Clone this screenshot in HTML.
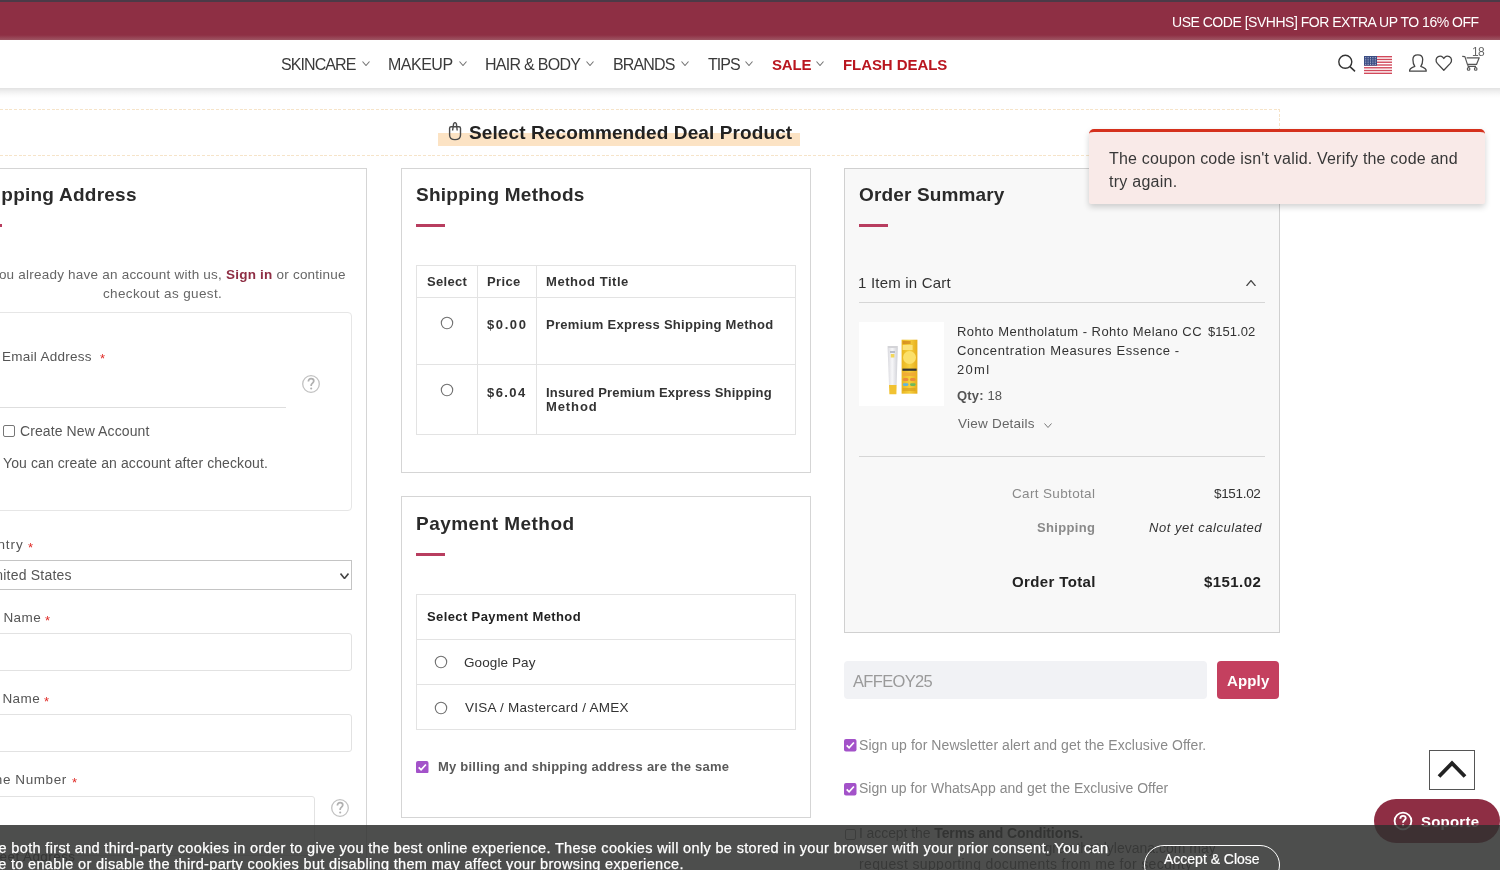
<!DOCTYPE html>
<html><head><meta charset="utf-8"><style>

*{margin:0;padding:0;box-sizing:border-box}
html,body{width:1500px;height:870px;overflow:hidden;background:#fff;font-family:"Liberation Sans",sans-serif;position:relative}
.t{position:absolute;white-space:nowrap;display:block;will-change:transform}
.b{position:absolute}
.red{color:#e02b27}

</style></head><body>
<div class="b" style="left:0px;top:88px;width:1500px;height:782px;background:#fff"></div>
<div class="b" style="left:0px;top:0px;width:1500px;height:40px;background:#8e2f44"></div>
<div class="b" style="left:0px;top:0px;width:1500px;height:2px;background:#4b3a47"></div>
<div class="b" style="left:0px;top:35px;width:1500px;height:5px;background:linear-gradient(#8e2f44,#9d5563)"></div>
<div class="b" style="left:0px;top:40px;width:1500px;height:48px;background:#fff"></div>
<div class="b" style="left:0px;top:88px;width:1500px;height:10px;background:linear-gradient(#e2e2e2,#f0f0f0 35%,#fafafa 70%,#fff)"></div>
<div class="b" style="left:0px;top:109px;width:1280px;height:1px;background:repeating-linear-gradient(90deg,#f6e4c9 0 3px,transparent 3px 4.7px)"></div>
<div class="b" style="left:0px;top:155px;width:1280px;height:1px;background:repeating-linear-gradient(90deg,#f6e4c9 0 3px,transparent 3px 4.7px)"></div>
<div class="b" style="left:1279px;top:109px;width:1px;height:47px;background:repeating-linear-gradient(180deg,#f6e4c9 0 3px,transparent 3px 4.7px)"></div>
<div class="b" style="left:438px;top:133px;width:362px;height:13px;background:#fce3c4"></div>
<div class="b" style="left:-41px;top:168px;width:408px;height:720px;border:1px solid #d5d5d5;background:#fff"></div>
<div class="b" style="left:-20px;top:224px;width:22px;height:3px;background:#b83d5f"></div>
<div class="b" style="left:-30px;top:312px;width:382px;height:199px;border:1px solid #e6e6e6;border-radius:4px;background:#fff"></div>
<div class="b" style="left:-30px;top:407px;width:316px;height:1px;background:#dedede"></div>
<div class="b" style="left:-30px;top:560px;width:382px;height:30px;border:1px solid #c4c4c4;background:#fff"></div>
<div class="b" style="left:-30px;top:633px;width:382px;height:38px;border:1px solid #e2e2e2;border-radius:3px;background:#fff"></div>
<div class="b" style="left:-30px;top:714px;width:382px;height:38px;border:1px solid #e2e2e2;border-radius:3px;background:#fff"></div>
<div class="b" style="left:-30px;top:796px;width:345px;height:60px;border:1px solid #e2e2e2;border-radius:3px;background:#fff"></div>
<div class="b" style="left:401px;top:168px;width:410px;height:305px;border:1px solid #d5d5d5;background:#fff"></div>
<div class="b" style="left:416px;top:224px;width:29px;height:3px;background:#b83d5f"></div>
<div class="b" style="left:416px;top:265px;width:380px;height:170px;border:1px solid #e3e3e3"></div>
<div class="b" style="left:416px;top:297px;width:380px;height:1px;background:#e3e3e3"></div>
<div class="b" style="left:416px;top:364px;width:380px;height:1px;background:#e3e3e3"></div>
<div class="b" style="left:477px;top:265px;width:1px;height:170px;background:#e3e3e3"></div>
<div class="b" style="left:536px;top:265px;width:1px;height:170px;background:#e3e3e3"></div>
<div class="b" style="left:401px;top:496px;width:410px;height:322px;border:1px solid #d5d5d5;background:#fff"></div>
<div class="b" style="left:416px;top:553px;width:29px;height:3px;background:#b83d5f"></div>
<div class="b" style="left:416px;top:594px;width:380px;height:136px;border:1px solid #e3e3e3"></div>
<div class="b" style="left:416px;top:639px;width:380px;height:1px;background:#e3e3e3"></div>
<div class="b" style="left:416px;top:684px;width:380px;height:1px;background:#e3e3e3"></div>
<div class="b" style="left:844px;top:168px;width:436px;height:465px;border:1px solid #d0d0d0;background:#f8f8f8"></div>
<div class="b" style="left:859px;top:224px;width:29px;height:3px;background:#b83d5f"></div>
<div class="b" style="left:859px;top:302px;width:406px;height:1px;background:#d6d6d6"></div>
<div class="b" style="left:859px;top:322px;width:85px;height:84px;background:#fff"></div>
<div class="b" style="left:859px;top:456px;width:406px;height:1px;background:#d6d6d6"></div>
<div class="b" style="left:844px;top:661px;width:363px;height:38px;background:#f1f2f5;border-radius:4px"></div>
<div class="b" style="left:1217px;top:661px;width:62px;height:38px;background:#c4405f;border-radius:4px"></div>
<svg class="b" style="left:439px;top:315px" width="16" height="16"><circle cx="8" cy="8" r="5.7" fill="#fff" stroke="#707070" stroke-width="1.1"/></svg>
<svg class="b" style="left:439px;top:382px" width="16" height="16"><circle cx="8" cy="8" r="5.7" fill="#fff" stroke="#707070" stroke-width="1.1"/></svg>
<svg class="b" style="left:432.5px;top:654px" width="16" height="16"><circle cx="8" cy="8" r="5.7" fill="#fff" stroke="#707070" stroke-width="1.1"/></svg>
<svg class="b" style="left:432.5px;top:699.5px" width="16" height="16"><circle cx="8" cy="8" r="5.7" fill="#fff" stroke="#707070" stroke-width="1.1"/></svg>
<svg class="b" style="left:416px;top:760.5px" width="12.5" height="12.5" viewBox="0 0 13 13"><rect x="0" y="0" width="13" height="13" rx="2" fill="#a352c9"/><path d="M2.8 6.6 L5.3 9.1 L10.3 3.6" fill="none" stroke="#fff" stroke-width="1.8"/></svg>
<svg class="b" style="left:844px;top:739px" width="12.5" height="12.5" viewBox="0 0 13 13"><rect x="0" y="0" width="13" height="13" rx="2" fill="#a352c9"/><path d="M2.8 6.6 L5.3 9.1 L10.3 3.6" fill="none" stroke="#fff" stroke-width="1.8"/></svg>
<svg class="b" style="left:844px;top:783px" width="12.5" height="12.5" viewBox="0 0 13 13"><rect x="0" y="0" width="13" height="13" rx="2" fill="#a352c9"/><path d="M2.8 6.6 L5.3 9.1 L10.3 3.6" fill="none" stroke="#fff" stroke-width="1.8"/></svg>
<div class="b" style="left:3px;top:425px;width:12px;height:12px;border:1px solid #767676;border-radius:2px;background:#fff"></div>
<svg class="b" style="left:301px;top:374.1px" width="20" height="20"><circle cx="10" cy="10" r="8.3" fill="none" stroke="#c2c2c2" stroke-width="1.3"/><path d="M7.4 7.6 C7.4 5.6 8.6 4.6 10.1 4.6 C11.7 4.6 12.8 5.6 12.8 7 C12.8 8.7 10.5 9.2 10.2 10.9 L10.2 12" fill="none" stroke="#b0b0b0" stroke-width="1.7"/><circle cx="10.2" cy="14.5" r="1.05" fill="#b0b0b0"/></svg>
<svg class="b" style="left:330px;top:798.4px" width="20" height="20"><circle cx="10" cy="10" r="8.3" fill="none" stroke="#c2c2c2" stroke-width="1.3"/><path d="M7.4 7.6 C7.4 5.6 8.6 4.6 10.1 4.6 C11.7 4.6 12.8 5.6 12.8 7 C12.8 8.7 10.5 9.2 10.2 10.9 L10.2 12" fill="none" stroke="#b0b0b0" stroke-width="1.7"/><circle cx="10.2" cy="14.5" r="1.05" fill="#b0b0b0"/></svg>
<svg class="b" style="left:361.5px;top:61.3px" width="8" height="5"><path d="M0.5 0.5 L4.0 4.5 L7.5 0.5" fill="none" stroke="#777" stroke-width="1.1"/></svg>
<svg class="b" style="left:458.5px;top:61.3px" width="8" height="5"><path d="M0.5 0.5 L4.0 4.5 L7.5 0.5" fill="none" stroke="#777" stroke-width="1.1"/></svg>
<svg class="b" style="left:586px;top:61.3px" width="8" height="5"><path d="M0.5 0.5 L4.0 4.5 L7.5 0.5" fill="none" stroke="#777" stroke-width="1.1"/></svg>
<svg class="b" style="left:680.5px;top:61.3px" width="8" height="5"><path d="M0.5 0.5 L4.0 4.5 L7.5 0.5" fill="none" stroke="#777" stroke-width="1.1"/></svg>
<svg class="b" style="left:745px;top:61.3px" width="8" height="5"><path d="M0.5 0.5 L4.0 4.5 L7.5 0.5" fill="none" stroke="#777" stroke-width="1.1"/></svg>
<svg class="b" style="left:816px;top:61.3px" width="8" height="5"><path d="M0.5 0.5 L4.0 4.5 L7.5 0.5" fill="none" stroke="#777" stroke-width="1.1"/></svg>
<svg class="b" style="left:339.5px;top:572.5px" width="9" height="6"><path d="M0.5 0.5 L4.5 5.5 L8.5 0.5" fill="none" stroke="#444" stroke-width="1.6"/></svg>
<svg class="b" style="left:1245.8px;top:279.8px" width="10" height="6.5"><path d="M0.5 6.0 L5.0 0.5 L9.5 6.0" fill="none" stroke="#444" stroke-width="1.2"/></svg>
<svg class="b" style="left:1044px;top:422.5px" width="8" height="5"><path d="M0.5 0.5 L4.0 4.5 L7.5 0.5" fill="none" stroke="#777" stroke-width="1.0"/></svg>
<svg class="b" style="left:1330px;top:44px" width="160" height="34" viewBox="1330 44 160 34">
<circle cx="1345.3" cy="61.8" r="6.5" fill="none" stroke="#333" stroke-width="1.4"/>
<path d="M1350 66.6 L1355 71.4" stroke="#333" stroke-width="1.5"/>
<path d="M1409.6 71.2 L1426.2 71.2 C1426.6 69.3 1424.5 67.8 1420.8 66.4 C1422.2 64.6 1422.7 62.5 1422.7 59.6 C1422.7 56.6 1420.6 54.9 1417.8 54.9 C1415 54.9 1412.9 56.6 1412.9 59.6 C1412.9 62.5 1413.4 64.6 1414.8 66.4 C1411.1 67.8 1409.2 69.3 1409.6 71.2 Z" fill="none" stroke="#444" stroke-width="1.3" stroke-linejoin="round"/>
<path d="M1443.8 70.2 L1437.3 63.4 C1435.4 61.3 1435.7 57.9 1438.2 56.6 C1440.5 55.4 1442.8 56.5 1443.8 58.5 C1444.8 56.5 1447.1 55.4 1449.4 56.6 C1451.9 57.9 1452.2 61.3 1450.3 63.4 Z" fill="none" stroke="#444" stroke-width="1.3" stroke-linejoin="round"/>
<path d="M1462.2 56.4 L1464.9 56.6 L1467.4 64.4 L1476.5 64.4 L1479.2 57.8 L1466.6 57.8" fill="none" stroke="#555" stroke-width="1.2" stroke-linejoin="round"/>
<path d="M1467.6 64.4 L1468.2 66.4 L1476 66.4" fill="none" stroke="#555" stroke-width="1.1"/>
<circle cx="1468.6" cy="68.9" r="1.3" fill="none" stroke="#555" stroke-width="1.1"/>
<circle cx="1475.7" cy="68.9" r="1.3" fill="none" stroke="#555" stroke-width="1.1"/>
</svg>
<svg class="b" style="left:1364px;top:56px" width="28" height="18" viewBox="0 0 28 18"><rect x="0" y="0.00" width="28" height="1.38" fill="#d1495b"/><rect x="0" y="2.77" width="28" height="1.38" fill="#d1495b"/><rect x="0" y="5.54" width="28" height="1.38" fill="#d1495b"/><rect x="0" y="8.31" width="28" height="1.38" fill="#d1495b"/><rect x="0" y="11.08" width="28" height="1.38" fill="#d1495b"/><rect x="0" y="13.85" width="28" height="1.38" fill="#d1495b"/><rect x="0" y="16.62" width="28" height="1.38" fill="#d1495b"/><rect x="0" y="0" width="13" height="9.7" fill="#3b4d84"/><rect x="1.2" y="1.2" width="1" height="1" fill="#c8cde0"/><rect x="3.6" y="1.2" width="1" height="1" fill="#c8cde0"/><rect x="6.0" y="1.2" width="1" height="1" fill="#c8cde0"/><rect x="8.4" y="1.2" width="1" height="1" fill="#c8cde0"/><rect x="10.8" y="1.2" width="1" height="1" fill="#c8cde0"/><rect x="1.2" y="3.4" width="1" height="1" fill="#c8cde0"/><rect x="3.6" y="3.4" width="1" height="1" fill="#c8cde0"/><rect x="6.0" y="3.4" width="1" height="1" fill="#c8cde0"/><rect x="8.4" y="3.4" width="1" height="1" fill="#c8cde0"/><rect x="10.8" y="3.4" width="1" height="1" fill="#c8cde0"/><rect x="1.2" y="5.6" width="1" height="1" fill="#c8cde0"/><rect x="3.6" y="5.6" width="1" height="1" fill="#c8cde0"/><rect x="6.0" y="5.6" width="1" height="1" fill="#c8cde0"/><rect x="8.4" y="5.6" width="1" height="1" fill="#c8cde0"/><rect x="10.8" y="5.6" width="1" height="1" fill="#c8cde0"/><rect x="1.2" y="7.8" width="1" height="1" fill="#c8cde0"/><rect x="3.6" y="7.8" width="1" height="1" fill="#c8cde0"/><rect x="6.0" y="7.8" width="1" height="1" fill="#c8cde0"/><rect x="8.4" y="7.8" width="1" height="1" fill="#c8cde0"/><rect x="10.8" y="7.8" width="1" height="1" fill="#c8cde0"/></svg>
<svg class="b" style="left:446px;top:119px" width="18" height="24" viewBox="446 119 18 24">
<path d="M449.6 128.2 Q449.6 126.7 451.1 126.7 L459 126.7 Q460.5 126.7 460.5 128.2 L460.5 135 Q460.5 139.6 455 139.6 Q449.6 139.6 449.6 135 Z" fill="none" stroke="#4a4a4a" stroke-width="1.4"/>
<path d="M452.6 130.5 L453.6 123.8 Q455 121.5 456.4 123.8 L457.2 130.5" fill="none" stroke="#4a4a4a" stroke-width="1.4"/>
</svg>
<svg class="b" style="left:859px;top:322px" width="85" height="84" viewBox="859 322 85 84">
<defs><linearGradient id="tg" x1="0" x2="1" y1="0" y2="0"><stop offset="0" stop-color="#d9d9de"/><stop offset="0.45" stop-color="#f7f7f9"/><stop offset="1" stop-color="#cfd0d6"/></linearGradient>
<linearGradient id="bg" x1="0" x2="1" y1="0" y2="0"><stop offset="0" stop-color="#e9b51f"/><stop offset="0.5" stop-color="#f6cf3d"/><stop offset="1" stop-color="#e6ad1c"/></linearGradient></defs>
<rect x="887.6" y="346" width="10.2" height="2.2" fill="#d4d4d8"/>
<path d="M887.6 348 L897.8 348 L896.6 385 L889 385 Z" fill="url(#tg)"/>
<rect x="890" y="351" width="5" height="2" fill="#b8bcc8"/>
<rect x="890.8" y="354" width="3.6" height="3.5" fill="#f3d75a"/>
<path d="M889 385 L896.6 385 L896.4 394.2 L889.4 394.2 Z" fill="#f1c232"/>
<rect x="901.6" y="339.7" width="15.8" height="54" fill="url(#bg)"/>
<rect x="902.6" y="341" width="8" height="3" fill="#c9781a" opacity="0.6"/>
<rect x="902.6" y="345" width="10" height="5" fill="#fbe27a"/>
<circle cx="909.5" cy="357.5" r="6.5" fill="#fbe06a"/>
<rect x="902.4" y="368.6" width="14.2" height="2.2" fill="#333"/>
<rect x="902.6" y="372.5" width="13" height="3.5" fill="#f0a53a" opacity="0.8"/>
<rect x="902.8" y="378" width="5.6" height="3" rx="1.5" fill="#ea8a3c"/>
<rect x="910" y="378" width="5.6" height="3" rx="1.5" fill="#ea8a3c"/>
<rect x="902.8" y="383.2" width="5.6" height="2.8" rx="1.4" fill="#62b5dc"/>
<rect x="910" y="383.2" width="5.6" height="2.8" rx="1.4" fill="#6cb95e"/>
<rect x="902.6" y="388" width="13" height="3" fill="#d9a020" opacity="0.7"/>
</svg>
<div class="b" style="left:1089px;top:129px;width:396px;height:75px;background:#f9eae8;border-top:3.5px solid #d5301c;border-radius:5px 5px 2px 2px;box-shadow:0 3px 6px rgba(0,0,0,0.18)"></div>
<div class="b" style="left:845px;top:828.5px;width:11px;height:11px;border:1px solid #888;border-radius:2px;background:#fff"></div>
<div class="b" style="left:1429px;top:750px;width:46px;height:40px;border:1px solid #555;background:#fff"></div>
<svg class="b" style="left:1436px;top:759px" width="32" height="22"><path d="M3 17.5 L16 4.2 L29 17.5" fill="none" stroke="#222" stroke-width="3.8"/></svg>
<div class="b" style="left:1374px;top:799px;width:126px;height:44px;background:#8e2e44;border-radius:22px"></div>
<svg class="b" style="left:1392.4px;top:810px" width="22" height="22"><circle cx="11" cy="11" r="8.4" fill="none" stroke="#fff" stroke-width="1.8"/><path d="M8.3 8.8 C8.3 6.9 9.5 5.9 11 5.9 C12.6 5.9 13.7 6.9 13.7 8.3 C13.7 10 11.5 10.4 11.1 12 L11.1 12.8" fill="none" stroke="#fff" stroke-width="1.9"/><circle cx="11.1" cy="15.4" r="1.15" fill="#fff"/></svg>
<span class="t" id="t0" style="left:1171.95px;top:14.55px;font-size:14px;line-height:14px;color:#fff;letter-spacing:-0.483px;">USE CODE [SVHHS] FOR EXTRA UP TO 16% OFF</span>
<span class="t" id="t1" style="left:281.28px;top:57.06px;font-size:16px;line-height:16px;color:#3a3a3a;letter-spacing:-0.915px;">SKINCARE</span>
<span class="t" id="t2" style="left:388.32px;top:57.06px;font-size:16px;line-height:16px;color:#3a3a3a;letter-spacing:-0.493px;">MAKEUP</span>
<span class="t" id="t3" style="left:484.72px;top:57.06px;font-size:16px;line-height:16px;color:#3a3a3a;letter-spacing:-0.711px;">HAIR &amp; BODY</span>
<span class="t" id="t4" style="left:612.72px;top:57.06px;font-size:16px;line-height:16px;color:#3a3a3a;letter-spacing:-0.851px;">BRANDS</span>
<span class="t" id="t5" style="left:708.18px;top:57.06px;font-size:16px;line-height:16px;color:#3a3a3a;letter-spacing:-0.997px;">TIPS</span>
<span class="t" id="t6" style="left:772.35px;top:57.10px;font-size:15px;line-height:15px;color:#b9161f;font-weight:700;letter-spacing:-0.203px;">SALE</span>
<span class="t" id="t7" style="left:842.62px;top:57.10px;font-size:15px;line-height:15px;color:#b9161f;font-weight:700;letter-spacing:-0.077px;">FLASH DEALS</span>
<span class="t" id="t8" style="left:469.03px;top:123.42px;font-size:19px;line-height:19px;color:#222;font-weight:700;letter-spacing:0.109px;">Select Recommended Deal Product</span>
<span class="t" id="t9" style="left:-28.72px;top:184.92px;font-size:19px;line-height:19px;color:#2a2a2a;font-weight:700;letter-spacing:0.242px;">Shipping Address</span>
<span class="t" id="t10" style="left:-19.88px;top:268.17px;font-size:13.5px;line-height:13.5px;color:#666;letter-spacing:0.221px;">If you already have an account with us, <b style="color:#8e2e44">Sign in</b> or continue</span>
<span class="t" id="t11" style="left:103.46px;top:286.57px;font-size:13.5px;line-height:13.5px;color:#666;letter-spacing:0.366px;">checkout as guest.</span>
<span class="t" id="t12" style="left:1.92px;top:349.57px;font-size:13.5px;line-height:13.5px;color:#555;letter-spacing:0.271px;">Email Address</span>
<span class="t" id="t13" style="left:100.31px;top:352.00px;font-size:13px;line-height:13px;color:#e02b27;">*</span>
<span class="t" id="t14" style="left:20.10px;top:424.15px;font-size:14px;line-height:14px;color:#555;letter-spacing:0.099px;">Create New Account</span>
<span class="t" id="t15" style="left:2.65px;top:456.15px;font-size:14px;line-height:14px;color:#555;letter-spacing:0.096px;">You can create an account after checkout.</span>
<span class="t" id="t16" style="left:-29.98px;top:538.17px;font-size:13.5px;line-height:13.5px;color:#555;letter-spacing:0.899px;">Country</span>
<span class="t" id="t17" style="left:27.80px;top:540.50px;font-size:13px;line-height:13px;color:#e02b27;">*</span>
<span class="t" id="t18" style="left:-15.25px;top:568.15px;font-size:14px;line-height:14px;color:#555;letter-spacing:0.206px;">United States</span>
<span class="t" id="t19" style="left:-28.88px;top:610.97px;font-size:13.5px;line-height:13.5px;color:#555;letter-spacing:0.410px;">First Name</span>
<span class="t" id="t20" style="left:44.80px;top:613.50px;font-size:13px;line-height:13px;color:#e02b27;">*</span>
<span class="t" id="t21" style="left:-29.08px;top:691.97px;font-size:13.5px;line-height:13.5px;color:#555;letter-spacing:0.428px;">Last Name</span>
<span class="t" id="t22" style="left:43.80px;top:694.50px;font-size:13px;line-height:13px;color:#e02b27;">*</span>
<span class="t" id="t23" style="left:-31.08px;top:773.37px;font-size:13.5px;line-height:13.5px;color:#555;letter-spacing:0.592px;">Phone Number</span>
<span class="t" id="t24" style="left:71.81px;top:776.00px;font-size:13px;line-height:13px;color:#e02b27;">*</span>
<span class="t" id="t25" style="left:-18.61px;top:849.57px;font-size:13.5px;line-height:13.5px;color:#555;letter-spacing:0.424px;">Street Address</span>
<span class="t" id="t26" style="left:416.43px;top:184.72px;font-size:19px;line-height:19px;color:#2a2a2a;font-weight:700;letter-spacing:0.246px;">Shipping Methods</span>
<span class="t" id="t27" style="left:427.21px;top:275.00px;font-size:13px;line-height:13px;color:#333;font-weight:700;letter-spacing:0.309px;">Select</span>
<span class="t" id="t28" style="left:486.75px;top:275.00px;font-size:13px;line-height:13px;color:#333;font-weight:700;letter-spacing:0.376px;">Price</span>
<span class="t" id="t29" style="left:545.65px;top:275.00px;font-size:13px;line-height:13px;color:#333;font-weight:700;letter-spacing:0.546px;">Method Title</span>
<span class="t" id="t30" style="left:487.41px;top:318.30px;font-size:13px;line-height:13px;color:#333;font-weight:700;letter-spacing:1.596px;">$0.00</span>
<span class="t" id="t31" style="left:545.65px;top:318.30px;font-size:13px;line-height:13px;color:#333;font-weight:700;letter-spacing:0.278px;">Premium Express Shipping Method</span>
<span class="t" id="t32" style="left:487.41px;top:385.50px;font-size:13px;line-height:13px;color:#333;font-weight:700;letter-spacing:1.432px;">$6.04</span>
<span class="t" id="t33" style="left:545.65px;top:385.50px;font-size:13px;line-height:13px;color:#333;font-weight:700;letter-spacing:0.196px;">Insured Premium Express Shipping</span>
<span class="t" id="t34" style="left:545.65px;top:400.20px;font-size:13px;line-height:13px;color:#333;font-weight:700;letter-spacing:0.896px;">Method</span>
<span class="t" id="t35" style="left:415.76px;top:513.62px;font-size:19px;line-height:19px;color:#2a2a2a;font-weight:700;letter-spacing:0.466px;">Payment Method</span>
<span class="t" id="t36" style="left:427.01px;top:610.00px;font-size:13px;line-height:13px;color:#222;font-weight:700;letter-spacing:0.385px;">Select Payment Method</span>
<span class="t" id="t37" style="left:464.32px;top:655.77px;font-size:13.5px;line-height:13.5px;color:#333;letter-spacing:0.103px;">Google Pay</span>
<span class="t" id="t38" style="left:464.93px;top:701.07px;font-size:13.5px;line-height:13.5px;color:#333;letter-spacing:0.261px;">VISA / Mastercard / AMEX</span>
<span class="t" id="t39" style="left:437.75px;top:759.90px;font-size:13px;line-height:13px;color:#5a5a5a;font-weight:700;letter-spacing:0.230px;">My billing and shipping address are the same</span>
<span class="t" id="t40" style="left:858.84px;top:184.92px;font-size:19px;line-height:19px;color:#2a2a2a;font-weight:700;letter-spacing:0.146px;">Order Summary</span>
<span class="t" id="t41" style="left:857.88px;top:275.30px;font-size:15px;line-height:15px;color:#333;letter-spacing:0.201px;">1 Item in Cart</span>
<span class="t" id="t42" style="left:956.96px;top:324.80px;font-size:13px;line-height:13px;color:#333;letter-spacing:0.476px;">Rohto Mentholatum - Rohto Melano CC</span>
<span class="t" id="t43" style="left:957.35px;top:344.00px;font-size:13px;line-height:13px;color:#333;letter-spacing:0.618px;">Concentration Measures Essence -</span>
<span class="t" id="t44" style="left:957.35px;top:362.60px;font-size:13px;line-height:13px;color:#333;letter-spacing:1.279px;">20ml</span>
<span class="t" id="t45" style="left:1208.27px;top:324.80px;font-size:13px;line-height:13px;color:#333;letter-spacing:0.033px;">$151.02</span>
<span class="t" id="t46" style="left:957.48px;top:388.70px;font-size:13px;line-height:13px;color:#555;letter-spacing:0.163px;"><b>Qty:</b> 18</span>
<span class="t" id="t47" style="left:957.93px;top:416.57px;font-size:13.5px;line-height:13.5px;color:#666;letter-spacing:0.227px;">View Details</span>
<span class="t" id="t48" style="left:1012.33px;top:486.97px;font-size:13.5px;line-height:13.5px;color:#8a8a8a;letter-spacing:0.349px;">Cart Subtotal</span>
<span class="t" id="t49" style="left:1214.27px;top:486.97px;font-size:13.5px;line-height:13.5px;color:#333;letter-spacing:-0.331px;">$151.02</span>
<span class="t" id="t50" style="left:1037.21px;top:521.40px;font-size:13px;line-height:13px;color:#8a8a8a;font-weight:700;letter-spacing:0.348px;">Shipping</span>
<span class="t" id="t51" style="left:1148.61px;top:521.40px;font-size:13px;line-height:13px;color:#333;font-style:italic;letter-spacing:0.545px;">Not yet calculated</span>
<span class="t" id="t52" style="left:1012.00px;top:574.30px;font-size:15px;line-height:15px;color:#222;font-weight:700;letter-spacing:0.368px;">Order Total</span>
<span class="t" id="t53" style="left:1204.18px;top:574.30px;font-size:15px;line-height:15px;color:#222;font-weight:700;letter-spacing:0.435px;">$151.02</span>
<span class="t" id="t54" style="left:853.00px;top:672.83px;font-size:16.5px;line-height:16.5px;color:#9a9a9a;letter-spacing:-0.671px;">AFFEOY25</span>
<span class="t" id="t55" style="left:1226.62px;top:673.30px;font-size:15px;line-height:15px;color:#fff;font-weight:700;letter-spacing:0.149px;">Apply</span>
<span class="t" id="t56" style="left:859.07px;top:737.55px;font-size:14px;line-height:14px;color:#8a8a8a;letter-spacing:0.063px;">Sign up for Newsletter alert and get the Exclusive Offer.</span>
<span class="t" id="t57" style="left:859.07px;top:781.15px;font-size:14px;line-height:14px;color:#8a8a8a;letter-spacing:0.027px;">Sign up for WhatsApp and get the Exclusive Offer</span>
<span class="t" id="t58" style="left:858.74px;top:825.75px;font-size:14px;line-height:14px;color:#666;letter-spacing:-0.082px;">I accept the <b style="color:#444">Terms and Conditions.</b></span>
<span class="t" id="t59" style="left:1029.23px;top:841.15px;font-size:14px;line-height:14px;color:#666;">I agree that lylevana.com may</span>
<span class="t" id="t60" style="left:859.09px;top:856.65px;font-size:14px;line-height:14px;color:#666;letter-spacing:0.354px;">request supporting documents from me for security</span>
<span class="t" id="t61" style="left:-44.27px;top:840.53px;font-size:14.5px;line-height:14.5px;color:#fff;letter-spacing:0.343px;z-index:11;-webkit-text-stroke:0.25px #fff;">We use both first and third-party cookies in order to give you the best online experience. These cookies will only be stored in your browser with your prior consent. You can</span>
<span class="t" id="t62" style="left:-76.12px;top:857.33px;font-size:14.5px;line-height:14.5px;color:#fff;letter-spacing:0.340px;z-index:11;-webkit-text-stroke:0.25px #fff;">You are free to enable or disable the third-party cookies but disabling them may affect your browsing experience.</span>
<span class="t" id="t63" style="left:1164.40px;top:852.15px;font-size:14px;line-height:14px;color:#fff;letter-spacing:-0.006px;z-index:11;-webkit-text-stroke:0.2px #fff;">Accept &amp; Close</span>
<span class="t" id="t64" style="left:1109.08px;top:151.26px;font-size:16px;line-height:16px;color:#383838;letter-spacing:0.198px;">The coupon code isn't valid. Verify the code and</span>
<span class="t" id="t65" style="left:1108.56px;top:173.66px;font-size:16px;line-height:16px;color:#383838;letter-spacing:0.268px;">try again.</span>
<span class="t" id="t66" style="left:1471.70px;top:45.64px;font-size:12px;line-height:12px;color:#666;letter-spacing:-0.665px;">18</span>
<span class="t" id="t67" style="left:1420.55px;top:813.80px;font-size:15px;line-height:15px;color:#fff;font-weight:700;letter-spacing:0.220px;">Soporte</span>
<div class="b" style="left:0px;top:825px;width:1500px;height:45px;background:rgba(48,49,48,0.86);z-index:10"></div>
<div class="b" style="left:1144px;top:844.5px;width:136px;height:40px;border:1.2px solid #fff;border-radius:20px;z-index:11"></div>
</body></html>
